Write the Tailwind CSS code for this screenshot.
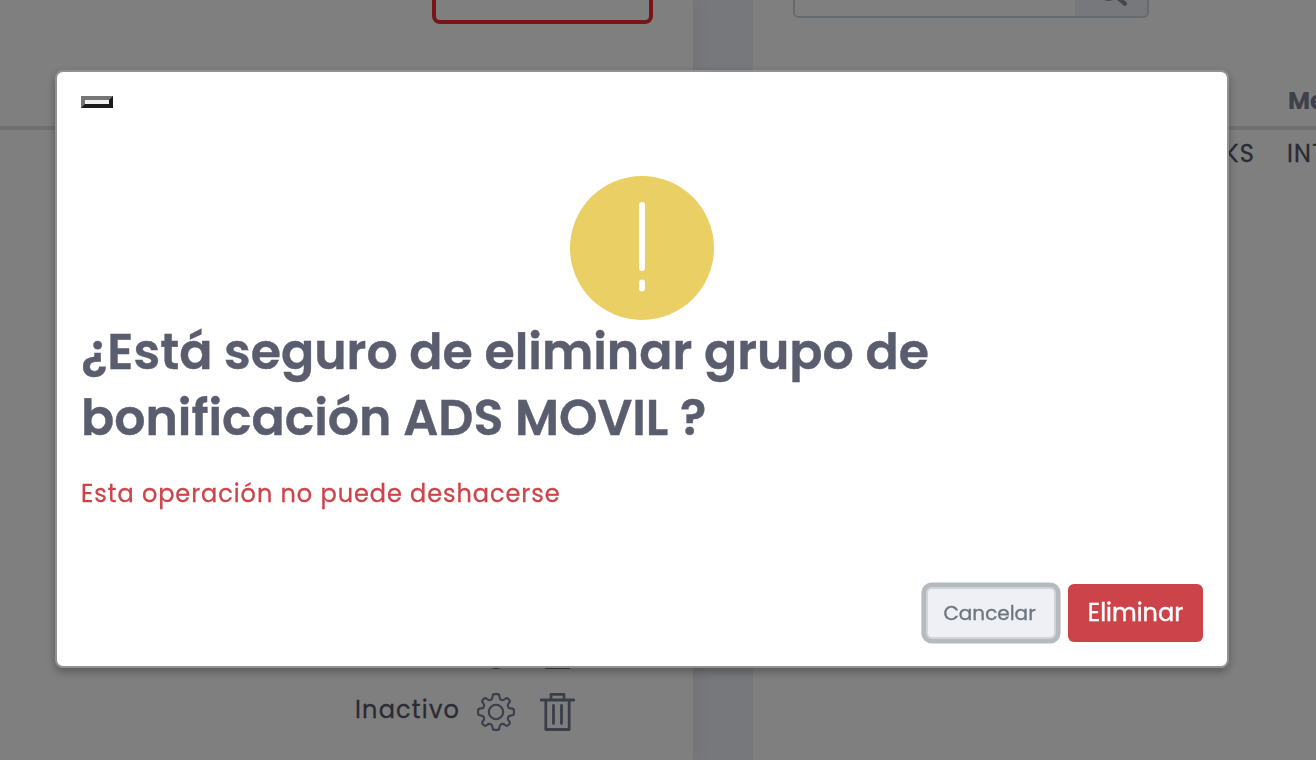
<!DOCTYPE html>
<html lang="es">
<head>
<meta charset="utf-8">
<title>Eliminar grupo</title>
<script src="https://cdn.jsdelivr.net/npm/@tailwindcss/browser@4"></script>
</head>
<body class="h-[760px] w-[1316px] overflow-hidden bg-[#eff0f6] font-[Poppins,Inter,sans-serif]">
<svg class="hidden">
  <defs>
    <path id="quarter" d="M19 1.1H21Q22.3 1.1 22.6 4.4Q22.8 6.6 24.8 7.1Q26.6 7.4 28 6Q29.8 4.5 31.1 5.7L32.3 6.9Q33.5 8.2 32 10Q30.6 11.4 30.9 13.2Q31.4 15.2 33.6 15.4Q36.9 15.7 36.9 17V19"/>
    <g id="gear" fill="none" stroke="#747c92" stroke-width="2.1">
      <use href="#quarter"/><use href="#quarter" transform="rotate(90 19 19)"/><use href="#quarter" transform="rotate(180 19 19)"/><use href="#quarter" transform="rotate(270 19 19)"/>
      <circle cx="19" cy="19" r="7.2"/>
    </g>
    <g id="trash" fill="none" stroke="#747c92" stroke-width="2.8" stroke-linejoin="round" stroke-linecap="round">
      <path d="M1.3 7H33.7M11 6.5V1.4H24V6.5M5.8 7.5V36.5H29.2V7.5"/>
      <path d="M13.5 12.5V30.5M21.5 12.5V30.5"/>
    </g>
  </defs>
</svg>
<main class="flex h-[760px] w-[1316px] gap-[60px] overflow-hidden text-[#555766]">
  <section class="flex w-[693px] shrink-0 flex-col bg-white shadow-[0_0_20px_rgba(8,21,66,0.06)]">
    <div class="box-content flex h-[126px] items-start justify-end border-b-4 border-[#dee2e6] pr-10">
      <button class="h-6 w-[221px] rounded-b-lg border-4 border-t-0 border-[#ee2a33]"></button>
    </div>
    <div class="mt-[489px] flex h-[62px] items-center pl-[477px]">
      <svg class="h-[38px] w-[38px]" viewBox="0 0 38 38"><use href="#gear"/></svg>
      <svg class="ml-[25px] h-[38px] w-[35px]" viewBox="0 0 35 38"><use href="#trash"/></svg>
    </div>
    <div class="flex h-[62px] items-center pl-[355px]">
      <span class="-mt-1 w-[122px] whitespace-nowrap text-[24px] leading-[40px] tracking-[1.2px] [-webkit-text-stroke:0.3px]">Inactivo</span>
      <svg class="h-[38px] w-[38px]" viewBox="0 0 38 38"><use href="#gear"/></svg>
      <svg class="ml-[25px] h-[38px] w-[35px]" viewBox="0 0 35 38"><use href="#trash"/></svg>
    </div>
  </section>
  <section class="flex w-[563px] shrink-0 flex-col overflow-hidden bg-white">
    <div class="ml-10 flex h-[18px] w-[356px] justify-end overflow-hidden rounded-b-md border-2 border-t-0 border-[#ced4da]">
      <div class="w-[72px] bg-[#eff0f6] pl-[25px]">
        <svg class="h-4 w-8" viewBox="0 0 32 16" fill="none" stroke="#958e8e" stroke-width="4.4" stroke-linecap="round"><circle cx="8.5" cy="-9.5" r="8.2"/><path d="M17 -3L24.8 3.6"/></svg>
      </div>
    </div>
    <div class="flex h-[112px] items-end border-b-4 border-[#dee2e6] pb-[5px] pl-[535px] text-[24px] font-bold leading-[40px] text-[#7d8299]">Me</div>
    <div class="flex h-[48px] items-center whitespace-nowrap text-[24px] tracking-[1.2px] [-webkit-text-stroke:0.3px]">
      <span class="w-[502px] shrink-0 text-right">LINKS</span><span class="ml-[32px]">INT</span>
    </div>
  </section>
</main>
<div class="fixed inset-0 bg-black/50">
  <div class="ml-[55px] mt-[70px] flex h-[598px] w-[1174px] flex-col rounded-lg border-2 border-[#929191] bg-white p-6 shadow-[0_4px_10px_rgba(0,0,0,0.3)]">
    <button class="h-3 w-8 border-4 border-t-[#767676] border-r-[#1b1b1e] border-b-[#1b1b1e] border-l-[#767676] bg-[#efefef]" aria-label="Cerrar"></button>
    <svg class="mt-[68px] h-36 w-36 shrink-0 self-center" viewBox="0 0 144 144"><circle cx="72" cy="72" r="72" fill="#e9cf64"/><rect x="69" y="26" width="6" height="69" rx="3" fill="#fff"/><rect x="69" y="103.5" width="6" height="12" rx="3" fill="#fff"/></svg>
    <h2 class="-mt-px text-[49px] font-semibold leading-[66px] text-[#5a5d6e] [-webkit-text-stroke:0.4px]">¿Está seguro de eliminar grupo de<br>bonificación ADS MOVIL ?</h2>
    <p class="mt-[25px] text-[24px] leading-9 tracking-[0.94px] text-[#cc444a] [-webkit-text-stroke:0.3px]">Esta operación no puede deshacerse</p>
    <div class="mt-auto flex items-center justify-end gap-3">
      <button class="h-[52px] w-[130px] rounded-md border-2 border-[#ced4da] bg-[#eff0f6] pr-[3px] text-[20px] text-[#6c757d] shadow-[0_0_0_4.6px_#b5babc] [-webkit-text-stroke:0.3px]">Cancelar</button>
      <button class="h-[58px] w-[135px] rounded-md bg-[#cc444a] text-[24px] text-white [-webkit-text-stroke:0.4px]">Eliminar</button>
    </div>
  </div>
</div>
</body>
</html>
